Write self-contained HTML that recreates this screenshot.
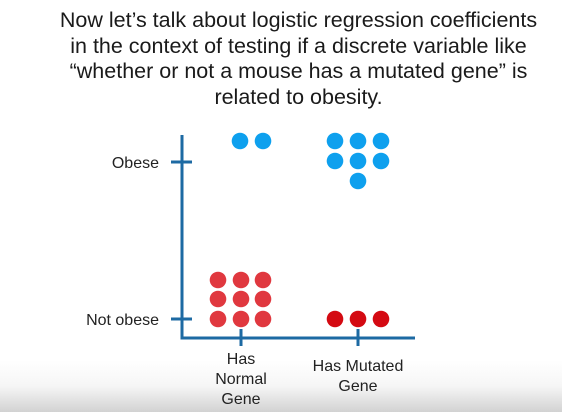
<!DOCTYPE html>
<html><head><style>
html,body{margin:0;padding:0}
body{width:562px;height:412px;position:relative;overflow:hidden;background:#fff;font-family:"Liberation Sans",sans-serif;color:#222}
.grad{position:absolute;left:0;top:360px;width:562px;height:52px;background:linear-gradient(#fff 0%,#f6f6f6 50%,#d2d2d2 100%)}
.title{position:absolute;left:0;top:8px;width:597px;text-align:center;font-size:21.5px;line-height:25.6px;color:#1a1a1a;white-space:nowrap}
svg{position:absolute;left:0;top:0}
</style></head><body>
<div class="grad"></div>
<div class="title">Now let’s talk about logistic regression coefficients<br>in the context of testing if a discrete variable like<br>“whether or not a mouse has a mutated gene” is<br>related to obesity.</div>
<svg width="562" height="412" font-family="Liberation Sans, sans-serif" font-size="16" fill="#222">
<g stroke="#1d6aa3" stroke-width="3" fill="none">
<path d="M182 135 V338 H415"/>
<path d="M171 162 H192 M171 319 H192 M241 329 V346 M358 329 V346"/>
</g>
<g fill="#0ea0ee">
<circle cx="240" cy="141" r="8.3"/><circle cx="263" cy="141" r="8.3"/>
<circle cx="335" cy="141" r="8.3"/><circle cx="358" cy="141" r="8.3"/><circle cx="381" cy="141" r="8.3"/>
<circle cx="335" cy="161" r="8.3"/><circle cx="358" cy="161" r="8.3"/><circle cx="381" cy="161" r="8.3"/>
<circle cx="358" cy="181" r="8.3"/>
</g>
<g fill="#e0383f">
<circle cx="218" cy="280" r="8.3"/><circle cx="241" cy="280" r="8.3"/><circle cx="263" cy="280" r="8.3"/>
<circle cx="218" cy="299" r="8.3"/><circle cx="241" cy="299" r="8.3"/><circle cx="263" cy="299" r="8.3"/>
<circle cx="218" cy="319" r="8.3"/><circle cx="241" cy="319" r="8.3"/><circle cx="263" cy="319" r="8.3"/>
</g>
<g fill="#d40a12">
<circle cx="335" cy="319" r="8.3"/><circle cx="358" cy="319" r="8.3"/><circle cx="381" cy="319" r="8.3"/>
</g>
<text x="159" y="168" text-anchor="end">Obese</text>
<text x="159" y="325" text-anchor="end">Not obese</text>
<g text-anchor="middle">
<text x="241" y="364">Has</text>
<text x="241" y="384">Normal</text>
<text x="241" y="404">Gene</text>
<text x="358" y="371">Has Mutated</text>
<text x="358" y="391">Gene</text>
</g>
</svg>
</body></html>
